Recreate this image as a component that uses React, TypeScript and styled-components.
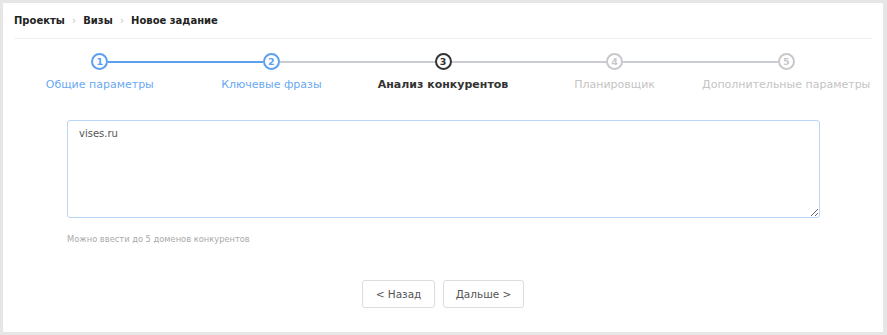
import styled, { createGlobalStyle } from "styled-components";

const GlobalStyle = createGlobalStyle`
  html, body {
    margin: 0;
    padding: 0;
    background: #e6e6e6;
  }
  body {
    font-family: "DejaVu Sans", Verdana, sans-serif;
  }
`;

const Page = styled.div`
  width: 887px;
  height: 335px;
  padding: 3px 4px 3px 3px;
  box-sizing: border-box;
`;

const Panel = styled.div`
  background: #fff;
  height: 100%;
  padding: 0 11px;
  box-sizing: border-box;
  display: flex;
  flex-direction: column;
`;

const Breadcrumbs = styled.div`
  height: 35px;
  display: flex;
  align-items: center;
  gap: 7px;
  border-bottom: 1px solid #f0f0f0;
  font-size: 10px;
  font-weight: bold;
  color: #222;
`;

const Crumb = styled.span``;

const Sep = styled.span`
  color: #c8c8c8;
  font-weight: normal;
  font-size: 11px;
`;

const Steps = styled.div`
  display: grid;
  grid-template-columns: repeat(5, minmax(0, 1fr));
  margin-top: 14px;
`;

const Step = styled.div`
  display: flex;
  flex-direction: column;
  align-items: center;
`;

const Track = styled.div`
  width: 100%;
  display: flex;
  align-items: center;
`;

const Line = styled.div<{ $color: string }>`
  flex: 1;
  height: 2px;
  background: ${(p) => p.$color};
`;

const Circle = styled.div<{ $color: string }>`
  width: 17px;
  height: 17px;
  border: 2px solid ${(p) => p.$color};
  border-radius: 50%;
  box-sizing: border-box;
  display: flex;
  align-items: center;
  justify-content: center;
  font-size: 9.5px;
  font-weight: bold;
  color: ${(p) => p.$color};
`;

const Label = styled.div<{ $color: string; $active: boolean }>`
  margin-top: 8px;
  font-size: 11px;
  white-space: nowrap;
  color: ${(p) => p.$color};
  font-weight: ${(p) => (p.$active ? "bold" : "normal")};
`;

const Body = styled.div`
  padding: 0 53px;
  margin-top: 29px;
  display: flex;
  flex-direction: column;
`;

const Domains = styled.textarea`
  width: 753px;
  height: 98px;
  box-sizing: border-box;
  border: 1px solid #b9d5f7;
  border-radius: 3px;
  padding: 7px 11px;
  font-family: "DejaVu Sans", Verdana, sans-serif;
  font-size: 10px;
  color: #555;
  outline: none;
  margin: 0;
`;

const Hint = styled.div`
  margin-top: 16px;
  font-size: 8.3px;
  color: #aaa;
`;

const Actions = styled.div`
  display: flex;
  justify-content: center;
  gap: 8px;
  margin-top: 36px;
`;

const Button = styled.button<{ $width: number }>`
  width: ${(p) => p.$width}px;
  height: 28px;
  background: #fff;
  border: 1px solid #ddd;
  border-radius: 3px;
  font-family: "DejaVu Sans", Verdana, sans-serif;
  font-size: 10.5px;
  color: #555;
  padding: 0;
`;

const steps = [
  { title: "Общие параметры", state: "done" },
  { title: "Ключевые фразы", state: "done" },
  { title: "Анализ конкурентов", state: "active" },
  { title: "Планировщик", state: "todo" },
  { title: "Дополнительные параметры", state: "todo" },
];

const colors: Record<string, string> = {
  done: "#5d9ff0",
  active: "#333",
  todo: "#c8c8cc",
};

const labelColors: Record<string, string> = {
  done: "#6aa9f2",
  active: "#333",
  todo: "#c4c4c4",
};

const lineBlue = "#5d9ff0";
const lineGray = "#c9ccd3";

const App = () => {
  return (
    <Page>
      <GlobalStyle />
      <Panel>
        <Breadcrumbs>
          <Crumb>Проекты</Crumb>
          <Sep>›</Sep>
          <Crumb>Визы</Crumb>
          <Sep>›</Sep>
          <Crumb>Новое задание</Crumb>
        </Breadcrumbs>
        <Steps>
          {steps.map((s, i) => {
            const left =
              i === 0 ? "transparent" : i === 1 ? lineBlue : lineGray;
            const right =
              i === steps.length - 1
                ? "transparent"
                : i === 0
                ? lineBlue
                : lineGray;
            return (
              <Step key={s.title}>
                <Track>
                  <Line $color={left} />
                  <Circle $color={colors[s.state]}>{i + 1}</Circle>
                  <Line $color={right} />
                </Track>
                <Label
                  $color={labelColors[s.state]}
                  $active={s.state === "active"}
                >
                  {s.title}
                </Label>
              </Step>
            );
          })}
        </Steps>
        <Body>
          <Domains defaultValue="vises.ru" />
          <Hint>Можно ввести до 5 доменов конкурентов</Hint>
          <Actions>
            <Button $width={73}>&lt; Назад</Button>
            <Button $width={81}>Дальше &gt;</Button>
          </Actions>
        </Body>
      </Panel>
    </Page>
  );
};

export default App;
